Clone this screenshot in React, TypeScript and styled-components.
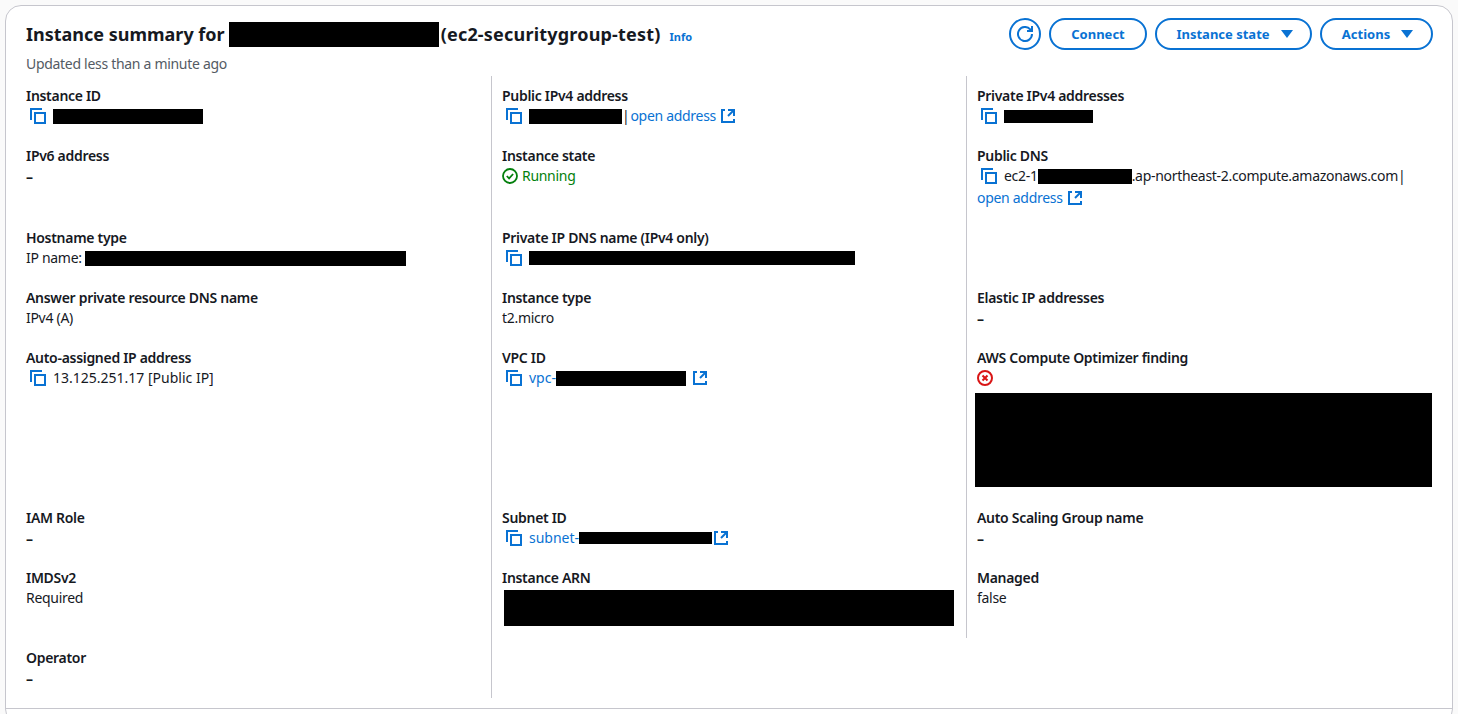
import styled, { createGlobalStyle } from 'styled-components'

const GlobalStyle = createGlobalStyle`
  html, body {
    margin: 0;
    background: #fafafa;
    font-family: "Noto Sans", "Open Sans", sans-serif;
    font-size: 14px;
    line-height: 20px;
    letter-spacing: -0.3px;
    color: #16191f;
  }
`
const Page = styled.div`
  height: 714px;
  padding: 5px 5px 0;
  box-sizing: border-box;
  overflow: hidden;
`
const Card = styled.section`
  height: 720px;
  box-sizing: border-box;
  background: #fff;
  border: 1px solid #c6c6cd;
  border-radius: 16px;
`
const Header = styled.header`
  display: flex;
  justify-content: space-between;
  height: 70px;
  padding: 12px 19px 0 20px;
  box-sizing: border-box;
`
const TitleRow = styled.div`
  display: flex;
  align-items: center;
  height: 32px;
`
const Title = styled.h1`
  margin: 0;
  display: flex;
  align-items: center;
  font-size: 18px;
  line-height: 24px;
  font-weight: 700;
  letter-spacing: 0;
  color: #16191f;
`
const InstanceName = styled.span`
  letter-spacing: 0.2px;
`
const InfoLink = styled.a`
  margin: 6px 0 0 9px;
  font-size: 11px;
  font-weight: 700;
  letter-spacing: 0;
  color: #0972d3;
`
const Updated = styled.div`
  margin-top: 4px;
  color: #545b64;
`
const Actions = styled.div`
  display: flex;
  gap: 8px;
`
const Button = styled.button<{ $width: number; $caret?: boolean }>`
  display: flex;
  align-items: center;
  justify-content: center;
  gap: 9px;
  width: ${p => p.$width}px;
  height: 32px;
  padding: 0 0 0 ${p => (p.$caret ? 4 : 0)}px;
  background: #fff;
  border: 2px solid #0972d3;
  border-radius: 16px;
  font: 700 13px/20px "Noto Sans", "Open Sans", sans-serif;
  color: #0972d3;
`
const Grid = styled.div`
  display: grid;
  grid-template-columns: repeat(3, 475px);
  padding: 0 10px;
`
const Cell = styled.div<{ $first?: boolean; $divider?: boolean; $pad?: number; $short?: boolean }>`
  padding: ${p => (p.$first ? 10 : 0)}px 10px ${p => p.$pad ?? 20}px;
  border-left: ${p => (p.$divider ? '1px solid #c6c6cd' : 'none')};
  align-self: ${p => (p.$short ? 'start' : 'stretch')};
`
const Label = styled.div`
  font-weight: 600;
  white-space: nowrap;
`
const Value = styled.div`
  display: flex;
  align-items: center;
  height: 20px;
  white-space: nowrap;
`
const Dash = styled.span`
  margin-top: 1px;
  font-weight: 700;
`
const Numeric = styled.span`
  letter-spacing: 0;
`
const CopyButton = styled.span`
  display: inline-flex;
  margin: 0 7px 0 4px;
  color: #0972d3;
`
const ExternalLink = styled.a`
  display: inline-flex;
  align-items: center;
  gap: 4px;
  color: #0972d3;
`
const IdLink = styled.a`
  letter-spacing: 0;
  color: #0972d3;
`
const Pipe = styled.span`
  margin: 0 1px 0 0;
`
const Redacted = styled.span<{ $width: number; $height?: number }>`
  display: inline-block;
  flex: none;
  width: ${p => p.$width}px;
  height: ${p => p.$height ?? 15}px;
  background: #000;
`
const TitleRedacted = styled(Redacted)`
  margin: 0 2px 0 4px;
`
const LinkIcon = styled.span<{ $gap: number }>`
  display: inline-flex;
  margin-left: ${p => p.$gap}px;
  color: #0972d3;
`
const Status = styled.span<{ $color: string }>`
  display: inline-flex;
  align-items: center;
  gap: 4px;
  color: ${p => p.$color};
`
const BlockRedaction = styled.div<{ $width: number; $height: number; $left: number; $top: number }>`
  width: ${p => p.$width}px;
  height: ${p => p.$height}px;
  margin-left: ${p => p.$left}px;
  margin-top: ${p => p.$top}px;
  background: #000;
`
const DnsLink = styled(ExternalLink)`
  display: flex;
  height: 22px;
  margin-top: 1px;
  margin-bottom: -1px;
`
const Footer = styled.div`
  border-top: 1px solid #c6c6cd;
  margin-top: 10px;
`

const iconProps = {
  width: 16,
  height: 16,
  viewBox: '0 0 16 16',
  fill: 'none',
  stroke: 'currentColor',
  strokeWidth: 2,
}

function CopyIcon() {
  return (
    <CopyButton>
      <svg {...iconProps}>
        <path d="M1 12V1h11" />
        <rect x="5" y="5" width="10" height="10" />
      </svg>
    </CopyButton>
  )
}

function ExternalIcon() {
  return (
    <svg {...iconProps}>
      <path d="M14 8.010v-6H8" />
      <path d="M14 2 8 8" />
      <path d="M5 2H2v12h12v-3" />
    </svg>
  )
}

function RefreshIcon() {
  return (
    <svg {...iconProps}>
      <path d="M10 5h5V0" />
      <path d="M15 8a7 7 0 1 1-1.800-4.700L15 5" />
    </svg>
  )
}

function CaretIcon() {
  return (
    <svg width="16" height="16" viewBox="0 0 16 16">
      <path d="M2 4h12L8 12z" fill="currentColor" />
    </svg>
  )
}

function RunningIcon() {
  return (
    <svg {...iconProps} strokeWidth={1.8}>
      <circle cx="8" cy="8" r="7" />
      <path d="m4.800 8 2.300 2.400 4-4.400" />
    </svg>
  )
}

function ErrorIcon() {
  return (
    <svg {...iconProps}>
      <circle cx="8" cy="8" r="7" />
      <path d="m5.500 5.500 5 5M10.500 5.500l-5 5" />
    </svg>
  )
}

export default function App() {
  return (
    <Page>
      <GlobalStyle />
      <Card>
        <Header>
          <div>
            <TitleRow>
              <Title>
                Instance summary for
                <TitleRedacted $width={210} $height={25} />
                <InstanceName>(ec2-securitygroup-test)</InstanceName>
              </Title>
              <InfoLink>Info</InfoLink>
            </TitleRow>
            <Updated>Updated less than a minute ago</Updated>
          </div>
          <Actions>
            <Button $width={32} aria-label="Refresh"><RefreshIcon /></Button>
            <Button $width={98}>Connect</Button>
            <Button $width={157} $caret>Instance state <CaretIcon /></Button>
            <Button $width={113} $caret>Actions <CaretIcon /></Button>
          </Actions>
        </Header>
        <Grid>
          <Cell $first>
            <Label>Instance ID</Label>
            <Value><CopyIcon /><Redacted $width={150} /></Value>
          </Cell>
          <Cell $first $divider>
            <Label>Public IPv4 address</Label>
            <Value>
              <CopyIcon />
              <Redacted $width={93} />
              <Pipe>|</Pipe>
              <ExternalLink>open address <ExternalIcon /></ExternalLink>
            </Value>
          </Cell>
          <Cell $first $divider>
            <Label>Private IPv4 addresses</Label>
            <Value><CopyIcon /><Redacted $width={89} $height={13} /></Value>
          </Cell>

          <Cell>
            <Label>IPv6 address</Label>
            <Value><Dash>–</Dash></Value>
          </Cell>
          <Cell $divider>
            <Label>Instance state</Label>
            <Value><Status $color="#037f0c"><RunningIcon />Running</Status></Value>
          </Cell>
          <Cell $divider>
            <Label>Public DNS</Label>
            <Value>
              <CopyIcon />
              ec2-1<Redacted $width={94} />.ap-northeast-2.compute.amazonaws.com|
            </Value>
            <DnsLink>open address <ExternalIcon /></DnsLink>
          </Cell>

          <Cell>
            <Label>Hostname type</Label>
            <Value>IP name:&nbsp;<Redacted $width={321} /></Value>
          </Cell>
          <Cell $divider>
            <Label>Private IP DNS name (IPv4 only)</Label>
            <Value><CopyIcon /><Redacted $width={326} $height={14} /></Value>
          </Cell>
          <Cell $divider />

          <Cell>
            <Label>Answer private resource DNS name</Label>
            <Value>IPv4 (A)</Value>
          </Cell>
          <Cell $divider>
            <Label>Instance type</Label>
            <Value>t2.micro</Value>
          </Cell>
          <Cell $divider>
            <Label>Elastic IP addresses</Label>
            <Value><Dash>–</Dash></Value>
          </Cell>

          <Cell>
            <Label>Auto-assigned IP address</Label>
            <Value><CopyIcon /><Numeric>13.125.251.17 [Public IP]</Numeric></Value>
          </Cell>
          <Cell $divider>
            <Label>VPC ID</Label>
            <Value>
              <CopyIcon />
              <IdLink>vpc-</IdLink>
              <Redacted $width={130} />
              <LinkIcon $gap={6}><ExternalIcon /></LinkIcon>
            </Value>
          </Cell>
          <Cell $divider $pad={21}>
            <Label>AWS Compute Optimizer finding</Label>
            <Value><Status $color="#d91515"><ErrorIcon /></Status></Value>
            <BlockRedaction $width={457} $height={94} $left={-2} $top={5} />
          </Cell>

          <Cell>
            <Label>IAM Role</Label>
            <Value><Dash>–</Dash></Value>
          </Cell>
          <Cell $divider>
            <Label>Subnet ID</Label>
            <Value>
              <CopyIcon />
              <IdLink>subnet-</IdLink>
              <Redacted $width={133} $height={12} />
              <LinkIcon $gap={1}><ExternalIcon /></LinkIcon>
            </Value>
          </Cell>
          <Cell $divider>
            <Label>Auto Scaling Group name</Label>
            <Value><Dash>–</Dash></Value>
          </Cell>

          <Cell>
            <Label>IMDSv2</Label>
            <Value>Required</Value>
          </Cell>
          <Cell $divider $pad={22}>
            <Label>Instance ARN</Label>
            <BlockRedaction $width={450} $height={36} $left={2} $top={2} />
          </Cell>
          <Cell $divider $short $pad={30}>
            <Label>Managed</Label>
            <Value>false</Value>
          </Cell>

          <Cell $pad={10}>
            <Label>Operator</Label>
            <Value><Dash>–</Dash></Value>
          </Cell>
          <Cell $divider $pad={10} />
        </Grid>
        <Footer />
      </Card>
    </Page>
  )
}
